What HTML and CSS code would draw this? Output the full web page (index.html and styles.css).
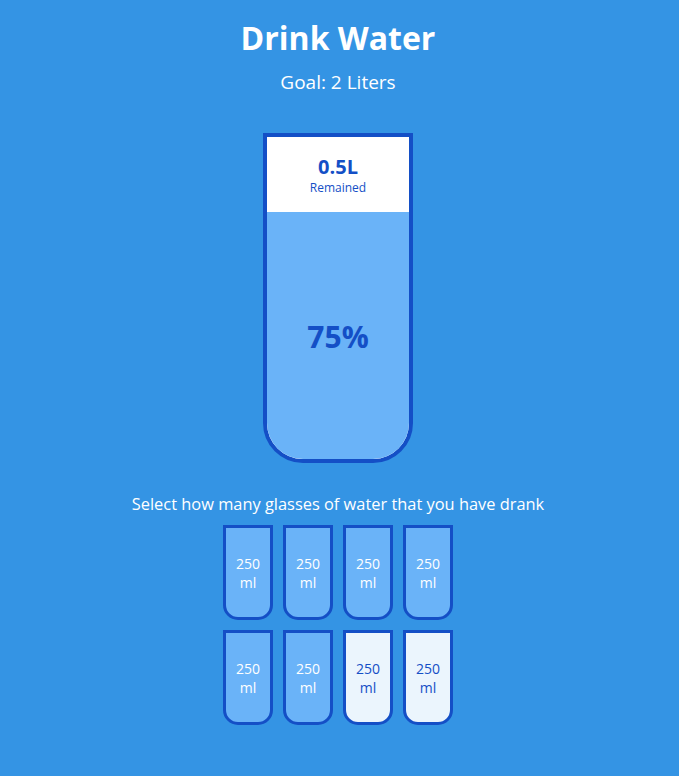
FILE: index.html
```html
<!DOCTYPE html>
<html lang="en">
<head>
<meta charset="UTF-8">
<title>Drink Water</title>
<link rel="stylesheet" href="styles.css">
</head>
<body>
  <h1 class="title">Drink Water</h1>
  <h3 class="goal">Goal: 2 Liters</h3>

  <div class="cup">
    <div class="remained">
      <span class="liters">0.5L</span>
      <small class="remained-label">Remained</small>
    </div>
    <div class="percentage" style="height: 247.5px">75%</div>
  </div>

  <p class="text">Select how many glasses of water that you have drank</p>

  <div class="cups">
    <div class="cup-small full">250<br>ml</div>
    <div class="cup-small full">250<br>ml</div>
    <div class="cup-small full">250<br>ml</div>
    <div class="cup-small full">250<br>ml</div>
    <div class="cup-small full">250<br>ml</div>
    <div class="cup-small full">250<br>ml</div>
    <div class="cup-small">250<br>ml</div>
    <div class="cup-small">250<br>ml</div>
  </div>
</body>
</html>
```

FILE: styles.css
```css
* {
  box-sizing: border-box;
}

body {
  margin: 8px 11px 8px 8px;
  background-color: #3494e4;
  color: #fff;
  font-family: "Open Sans", "Noto Sans", sans-serif;
  display: flex;
  flex-direction: column;
  align-items: center;
}

.title {
  margin: 10px 0 0;
  font-size: 32px;
  line-height: 40px;
  font-weight: 700;
}

.goal {
  margin: 12px 0 8px;
  font-size: 19px;
  line-height: 25px;
  font-weight: 400;
}

.cup {
  background-color: #fff;
  border: 4px solid #144fc6;
  color: #144fc6;
  border-radius: 0 0 40px 40px;
  height: 330px;
  width: 150px;
  margin: 30px 0;
  display: flex;
  flex-direction: column;
  overflow: hidden;
}

.remained {
  flex: 1;
  display: flex;
  flex-direction: column;
  align-items: center;
  justify-content: center;
  text-align: center;
  padding-top: 2px;
}

.liters {
  font-size: 20px;
  font-weight: 700;
  line-height: 26px;
}

.remained-label {
  font-size: 12px;
  line-height: 16px;
}

.percentage {
  background-color: #6ab3f8;
  display: flex;
  align-items: center;
  justify-content: center;
  font-weight: 700;
  font-size: 30px;
  flex-shrink: 0;
  padding-top: 2px;
}

.text {
  margin: 0 0 5px;
  font-size: 16.4px;
  line-height: 22px;
  text-align: center;
}

.cups {
  display: flex;
  flex-wrap: wrap;
  align-items: center;
  justify-content: center;
  width: 280px;
}

.cup-small {
  height: 95px;
  width: 50px;
  margin: 5px;
  border: 3px solid #144fc6;
  border-radius: 0 0 15px 15px;
  background-color: rgba(255, 255, 255, 0.9);
  color: #144fc6;
  font-size: 14px;
  line-height: 19px;
  display: flex;
  align-items: center;
  justify-content: center;
  text-align: center;
}

.cup-small.full {
  background-color: #6ab3f8;
  color: #fff;
}
```
